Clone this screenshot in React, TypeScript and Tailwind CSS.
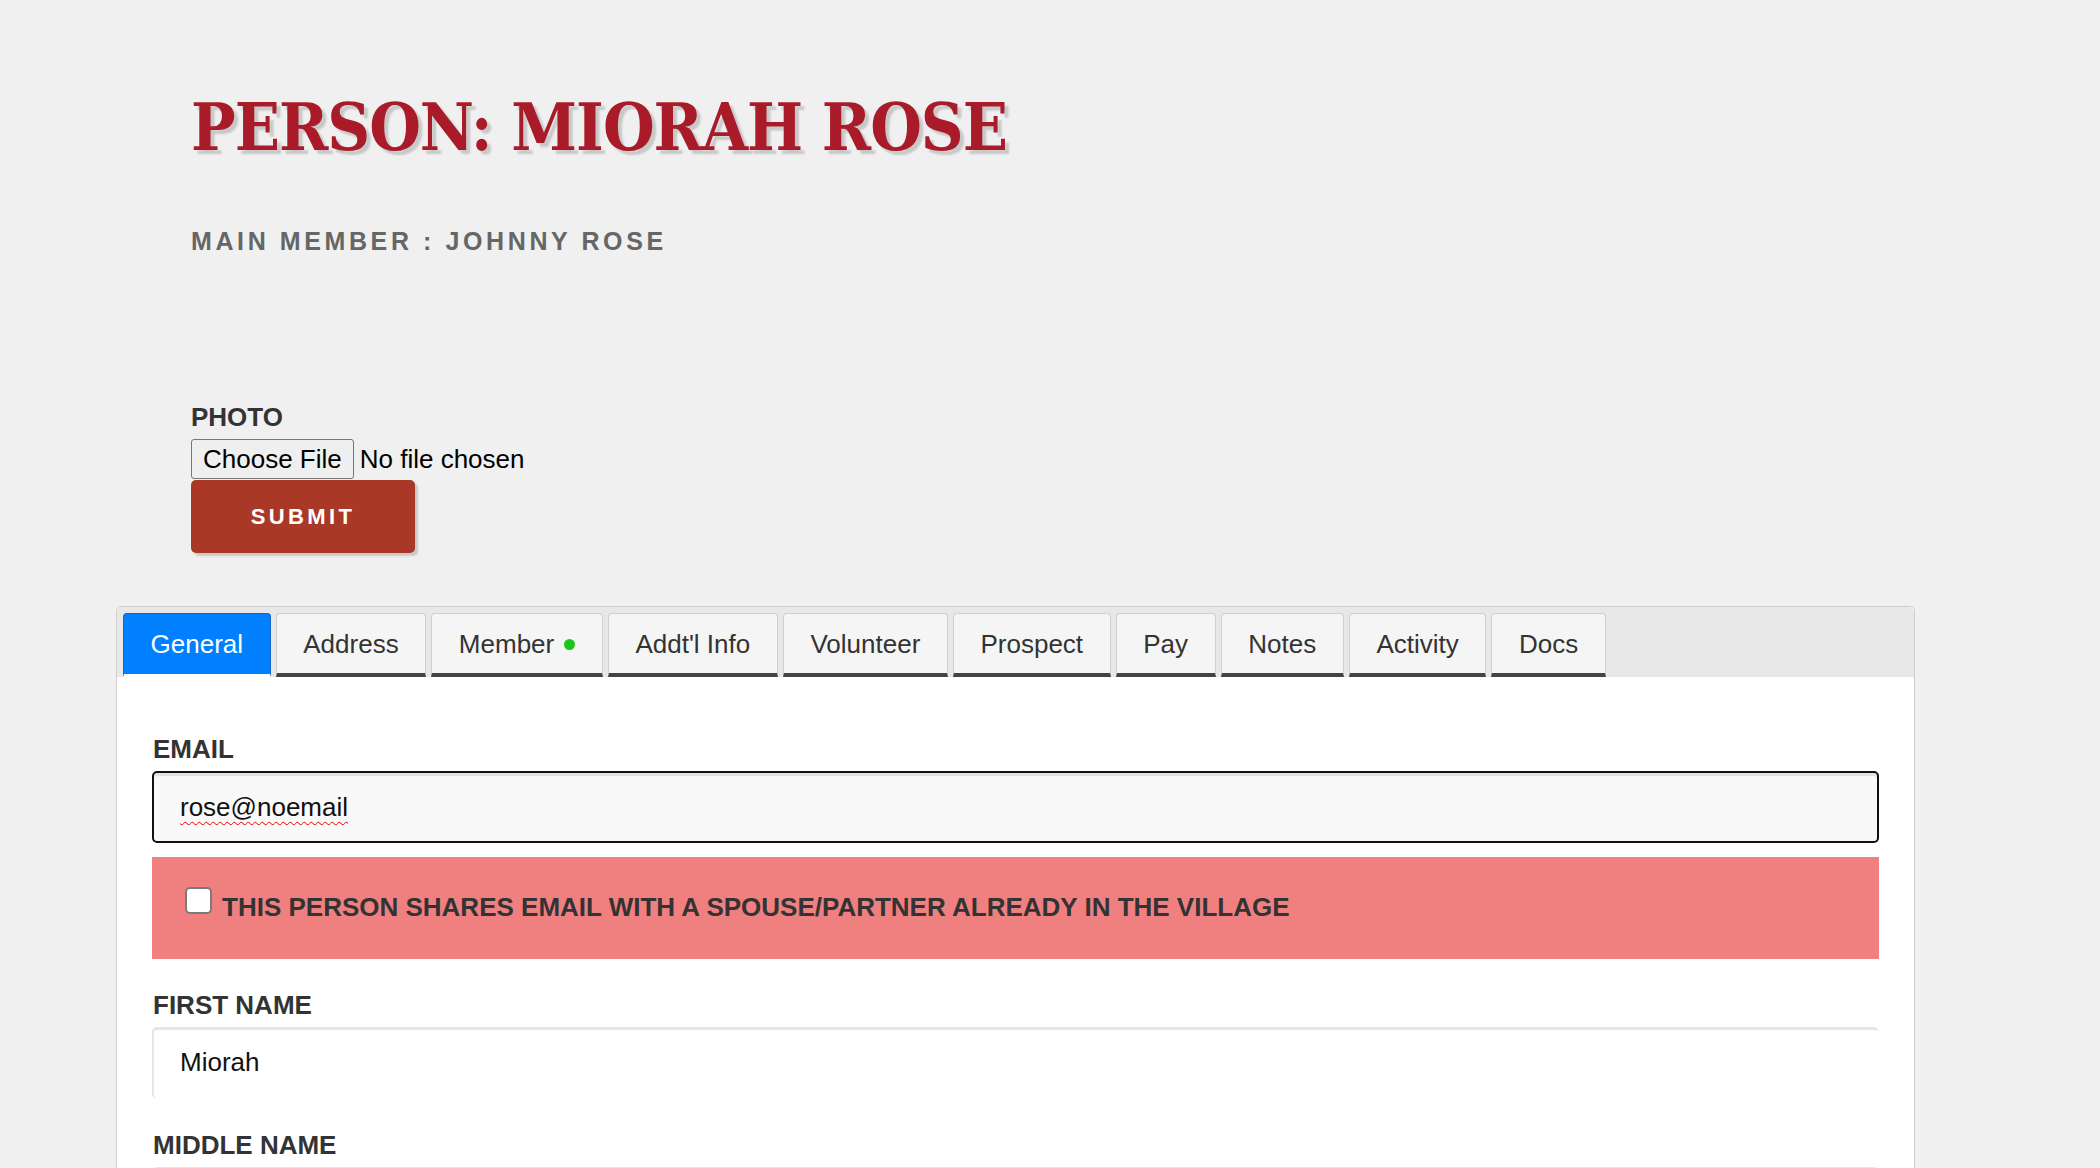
import React from "react";

const tabs = [
  { label: "General", active: true },
  { label: "Address" },
  { label: "Member", dot: true },
  { label: "Addt'l Info" },
  { label: "Volunteer" },
  { label: "Prospect" },
  { label: "Pay" },
  { label: "Notes" },
  { label: "Activity" },
  { label: "Docs" },
];

const Label = ({ children, className = "" }: { children: React.ReactNode; className?: string }) => (
  <div className={`text-[26px] leading-[30px] font-bold text-[#333] ${className}`}>{children}</div>
);

export default function App() {
  return (
    <div className="h-[1168px] overflow-hidden bg-[#f0f0f0] font-['Liberation_Sans',Arial,sans-serif]">
      <div className="pl-[116px]">
        <div className="pl-[75px]">
          <h1 className="pt-[94px] text-[66px] leading-[66px] font-bold tracking-[-1px] text-[#a91b28] font-['DejaVu_Serif_Condensed','DejaVu_Serif',serif] [font-stretch:condensed] [text-shadow:4px_4px_2px_#c8c8c8]">
            PERSON: MIORAH ROSE
          </h1>
          <div className="mt-[66px] text-[25px] leading-[30px] font-bold tracking-[3.6px] text-[#666]">
            MAIN MEMBER : JOHNNY ROSE
          </div>

          <Label className="mt-[146px]">PHOTO</Label>
          <div className="mt-[7px] flex items-center gap-[6px] text-[26px] text-black">
            <span className="h-[40px] px-[11px] flex items-center bg-[#efefef] border border-[#767676] rounded-[3px]">
              Choose File
            </span>
            <span>No file chosen</span>
          </div>
          <button className="mt-[1px] w-[224px] h-[73px] bg-[#a93826] rounded-[5px] text-white text-[22px] font-bold tracking-[3.4px] shadow-[3px_3px_2px_#c9c9c9]">
            SUBMIT
          </button>
        </div>

        <div className="mt-[53px] w-[1799px] bg-white border border-[#cfcfcf] rounded-t-[5px]">
          <div className="flex gap-[5px] bg-[#e8e8e8] pt-[6px] pl-[6px] rounded-t-[5px]">
            {tabs.map((t) => (
              <div
                key={t.label}
                className={
                  t.active
                    ? "h-[64px] px-[26.6px] pt-[1px] flex items-center gap-[10px] text-[26px] text-white bg-[#0080ff] border border-[#1565c8] border-b-[3px] border-b-white rounded-t-[4px]"
                    : "h-[64px] px-[26.6px] pt-[1px] flex items-center gap-[10px] text-[26px] text-[#333] bg-[#f5f5f5] border border-[#d0d0d0] border-b-[4px] border-b-[#444] rounded-t-[4px]"
                }
              >
                {t.label}
                {t.dot && <span className="w-[11px] h-[11px] rounded-full bg-[#1fc51f]" />}
              </div>
            ))}
          </div>

          <div className="px-[35px] pt-[57px] pb-[40px]">
            <Label className="pl-[1px]">EMAIL</Label>
            <div className="mt-[7px] h-[72px] flex items-center pl-[26px] bg-[#f9f9f9] border-2 border-[#111] rounded-[5px] shadow-[inset_0_3px_0_#e2e2e2] text-[26px] text-[#111]">
              <span className="underline decoration-wavy decoration-[#e00] decoration-[1px] underline-offset-[5px]">rose@noemail</span>
            </div>

            <div className="mt-[14px] h-[102px] bg-[#f08080] flex items-start pl-[33px] pt-[30px]">
              <span className="w-[27px] h-[27px] shrink-0 bg-white border-2 border-[#7a7a7a] rounded-[5px]" />
              <span className="ml-[10px] mt-[5px] text-[26px] leading-[30px] font-bold text-[#333]">
                THIS PERSON SHARES EMAIL WITH A SPOUSE/PARTNER ALREADY IN THE VILLAGE
              </span>
            </div>

            <Label className="mt-[31px] pl-[1px]">FIRST NAME</Label>
            <div className="mt-[7px] h-[72px] flex items-center pl-[26px] pb-[4px] bg-white border-t-[3px] border-l-2 border-[#e6e6e6] rounded-[5px] text-[26px] text-[#111]">
              Miorah
            </div>

            <Label className="mt-[31px] pl-[1px]">MIDDLE NAME</Label>
            <div className="mt-[7px] h-[72px] bg-white border-t-[3px] border-l-2 border-[#e6e6e6] rounded-[5px]" />
          </div>
        </div>
      </div>
    </div>
  );
}
